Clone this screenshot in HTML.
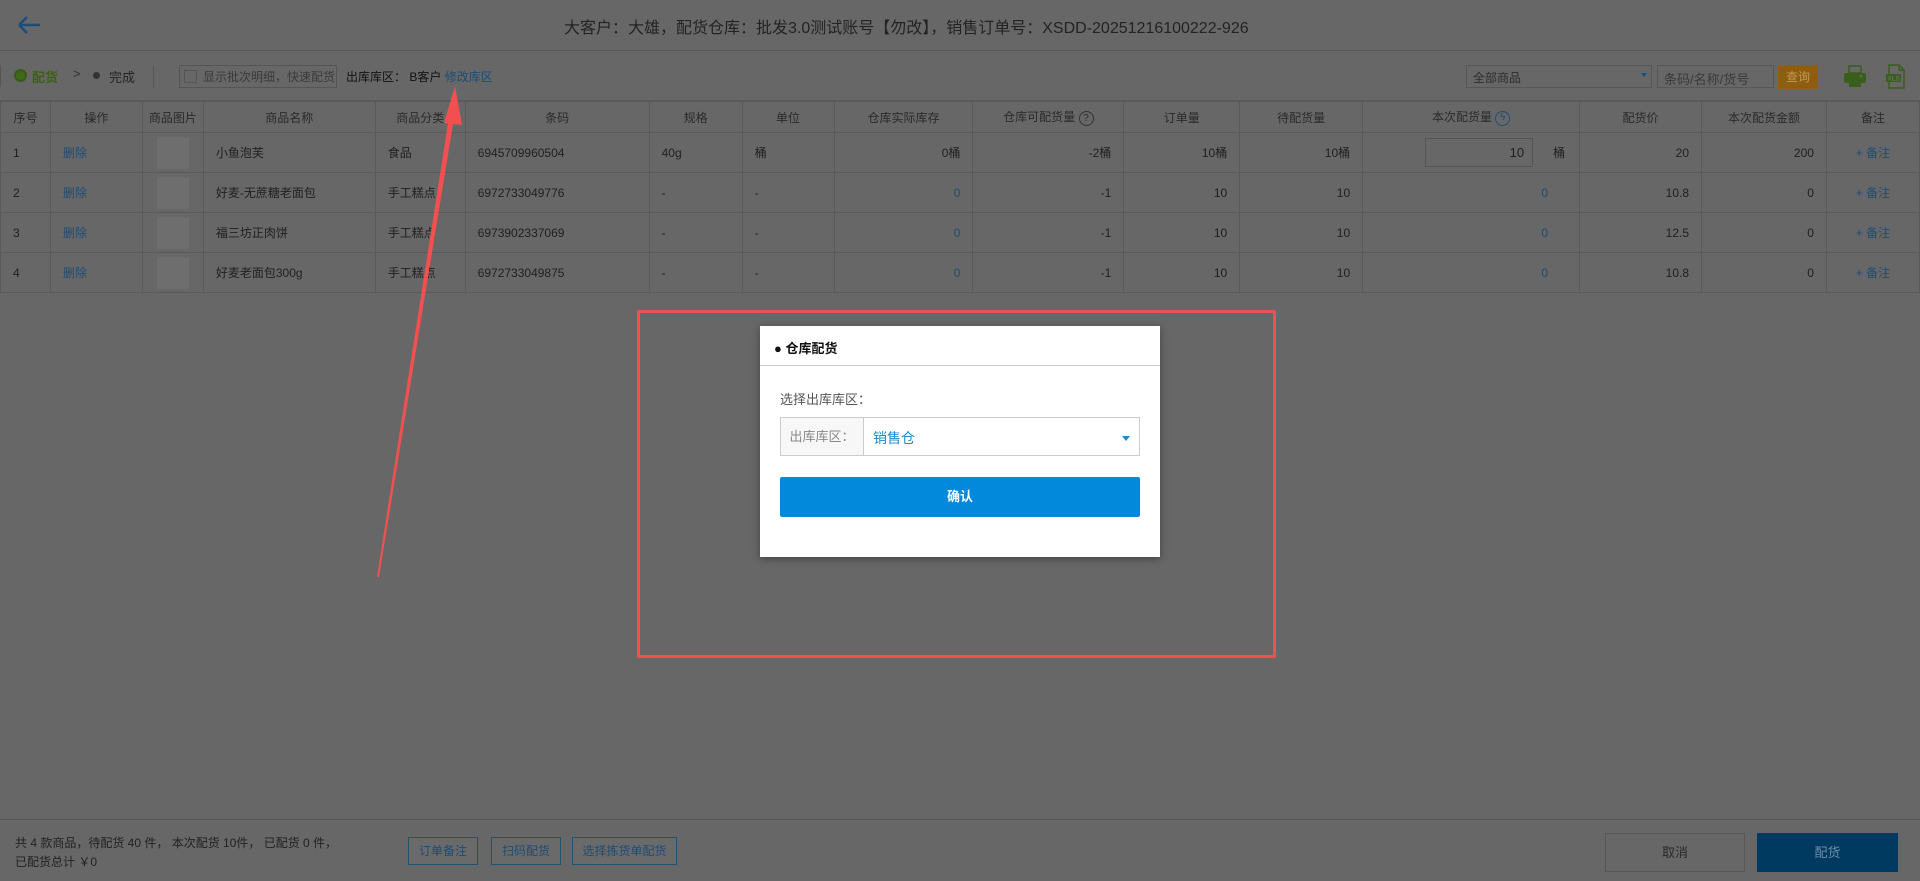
<!DOCTYPE html>
<html><head><meta charset="utf-8"><style>
*{margin:0;padding:0;box-sizing:border-box}
body{width:1920px;height:881px;background:#676767;font-family:"Liberation Sans","Noto Sans CJK SC",sans-serif;color:#1f1f1f;position:relative;overflow:hidden;font-size:12px}
.a{position:absolute;white-space:nowrap}
.blue{color:#1c4c78}
table{position:absolute;left:0;top:101px;width:1920px;border-collapse:collapse;font-size:12px}
td,th{border:1px solid #5a5a5a;height:40px;padding:0 12px;font-weight:normal}
th{height:31px;text-align:center;color:#2a2a2a}
td.r{text-align:right}
.img{display:inline-block;width:32px;height:32px;background:#6e6e6e;vertical-align:middle}
.btn{position:absolute;border:1px solid #1d5570;color:#1c4c78;background:#6a6a6a;text-align:center;font-size:12px}
</style></head><body>
<svg class="a" style="left:16px;top:14px" width="26" height="22" viewBox="0 0 26 22"><path d="M3 11H24M3 11L11 3M3 11L11 19" stroke="#1c4c78" stroke-width="2.4" fill="none"/></svg>
<div class="a" style="left:564px;top:14px;font-size:16px;color:#232323">大客户：大雄，配货仓库：批发3.0测试账号【勿改】，销售订单号：XSDD-20251216100222-926</div>
<div class="a" style="left:0;top:50px;width:1920px;height:1px;background:#585858"></div>
<div class="a" style="left:0;top:65px;width:1px;height:22px;background:#555"></div>
<div class="a" style="left:14px;top:69px;width:13px;height:13px;border-radius:50%;border:2px solid #3a5a1a;background:#3d6b1a"></div>
<div class="a" style="left:32px;top:67px;font-size:13px;color:#3d6015;font-weight:bold">配货</div>
<div class="a" style="left:73px;top:66px;font-size:13px;color:#333">&gt;</div>
<div class="a" style="left:93px;top:72px;width:7px;height:7px;border-radius:50%;background:#333"></div>
<div class="a" style="left:109px;top:67px;font-size:13px;color:#252525">完成</div>
<div class="a" style="left:153px;top:66px;width:1px;height:22px;background:#575757"></div>
<div class="a" style="left:179px;top:65px;width:158px;height:23px;border:1px solid #555"></div>
<div class="a" style="left:184px;top:70px;width:13px;height:13px;border:1px solid #555"></div>
<div class="a" style="left:203px;top:68px;font-size:12px;color:#3a3a3a">显示批次明细，快速配货</div>
<div class="a" style="left:346px;top:68px;font-size:12px;color:#111">出库库区： B客户 <span class="blue">修改库区</span></div>
<div class="a" style="left:1466px;top:65px;width:186px;height:23px;border:1px solid #575757"></div>
<div class="a" style="left:1473px;top:69px;color:#2d2d2d">全部商品</div>
<div class="a" style="left:1641px;top:73px;width:0;height:0;border-left:3px solid transparent;border-right:3px solid transparent;border-top:4px solid #1c4c78"></div>
<div class="a" style="left:1657px;top:65px;width:117px;height:23px;border:1px solid #575757"></div>
<div class="a" style="left:1664px;top:69px;color:#3a3a3a;font-size:13px">条码/名称/货号</div>
<div class="a" style="left:1778px;top:65px;width:40px;height:24px;background:#8e5d10;border:1px solid #9a5a10;color:#c09a58;font-size:12px;text-align:center;line-height:22px">查询</div>
<svg class="a" style="left:1843px;top:64px" width="24" height="24" viewBox="0 0 24 24"><rect x="6" y="2" width="12" height="7" fill="none" stroke="#3a5f1c" stroke-width="1.5"/><rect x="1" y="9" width="22" height="10" rx="2" fill="#3a5f1c"/><rect x="6" y="17" width="12" height="6" fill="#3a5f1c"/><circle cx="18" cy="12" r="1.3" fill="#666"/></svg>
<svg class="a" style="left:1886px;top:64px" width="20" height="25" viewBox="0 0 20 25"><path d="M3 1H13L18 6V24H3Z" fill="none" stroke="#3a5f1c" stroke-width="1.5"/><path d="M13 1V6H18" fill="none" stroke="#3a5f1c" stroke-width="1.5"/><rect x="0" y="10" width="15" height="8" fill="#3a5f1c"/><text x="1.5" y="16.5" font-size="6.5" fill="#777" font-family="Liberation Sans">XLS</text></svg>
<div class="a" style="left:0;top:100px;width:1920px;height:1px;background:#585858"></div>
<table>
<colgroup><col style="width:50px"><col style="width:92px"><col style="width:61px"><col style="width:172px"><col style="width:90px"><col style="width:184px"><col style="width:93px"><col style="width:92px"><col style="width:139px"><col style="width:151px"><col style="width:116px"><col style="width:123px"><col style="width:217px"><col style="width:122px"><col style="width:125px"><col style="width:93px"></colgroup>
<tr><th style="padding:0 4px">序号</th><th>操作</th><th style="padding:0 4px">商品图片</th><th>商品名称</th><th>商品分类</th><th>条码</th><th>规格</th><th>单位</th><th>仓库实际库存</th><th>仓库可配货量 <span style="display:inline-block;width:15px;height:15px;border:1px solid #333;border-radius:50%;font-size:10px;line-height:13px">?</span></th><th>订单量</th><th>待配货量</th><th>本次配货量 <span style="display:inline-block;width:15px;height:15px;border:1.5px solid #1c4c78;border-radius:50%;color:#1c4c78;font-size:10px;line-height:12px;vertical-align:middle">ϟ</span></th><th>配货价</th><th>本次配货金额</th><th>备注</th></tr>
<tr><td>1</td><td class="blue">删除</td><td style="text-align:center;padding:0"><span class="img"></span></td><td>小鱼泡芙</td><td>食品</td><td>6945709960504</td><td>40g</td><td>桶</td><td class="r">0桶</td><td class="r">-2桶</td><td class="r">10桶</td><td class="r">10桶</td><td style="text-align:right;padding-right:28px"><span style="display:inline-block;width:108px;height:29px;border:1px solid #555;text-align:right;padding-right:8px;line-height:27px;font-size:13px;margin-right:6px">10</span><span style="position:relative;right:-14px">桶</span></td><td class="r">20</td><td class="r">200</td><td style="text-align:center" class="blue">+ 备注</td></tr>
<tr><td>2</td><td class="blue">删除</td><td style="text-align:center;padding:0"><span class="img"></span></td><td>好麦-无蔗糖老面包</td><td>手工糕点</td><td>6972733049776</td><td>-</td><td>-</td><td class="r blue">0</td><td class="r">-1</td><td class="r">10</td><td class="r">10</td><td class="r blue" style="padding-right:31px">0</td><td class="r">10.8</td><td class="r">0</td><td style="text-align:center" class="blue">+ 备注</td></tr>
<tr><td>3</td><td class="blue">删除</td><td style="text-align:center;padding:0"><span class="img"></span></td><td>福三坊正肉饼</td><td>手工糕点</td><td>6973902337069</td><td>-</td><td>-</td><td class="r blue">0</td><td class="r">-1</td><td class="r">10</td><td class="r">10</td><td class="r blue" style="padding-right:31px">0</td><td class="r">12.5</td><td class="r">0</td><td style="text-align:center" class="blue">+ 备注</td></tr>
<tr><td>4</td><td class="blue">删除</td><td style="text-align:center;padding:0"><span class="img"></span></td><td>好麦老面包300g</td><td>手工糕点</td><td>6972733049875</td><td>-</td><td>-</td><td class="r blue">0</td><td class="r">-1</td><td class="r">10</td><td class="r">10</td><td class="r blue" style="padding-right:31px">0</td><td class="r">10.8</td><td class="r">0</td><td style="text-align:center" class="blue">+ 备注</td></tr>
</table>
<div class="a" style="left:637px;top:310px;width:639px;height:348px;border:3px solid #f25050;border-radius:2px"></div>
<div class="a" style="left:760px;top:326px;width:400px;height:231px;background:#fff;box-shadow:0 2px 8px rgba(0,0,0,.35)">
<div class="a" style="left:14px;top:12px;font-size:13px;font-weight:bold;color:#111">● 仓库配货</div>
<div class="a" style="left:0;top:39px;width:400px;height:1px;background:#ccc"></div>
<div class="a" style="left:20px;top:63px;font-size:13px;color:#555">选择出库库区：</div>
<div class="a" style="left:20px;top:91px;width:360px;height:39px;border:1px solid #ccc"></div>
<div class="a" style="left:21px;top:92px;width:83px;height:37px;background:#f7f7f7;border-right:1px solid #ccc;color:#888;font-size:13px;line-height:37px;text-align:center">出库库区：</div>
<div class="a" style="left:113px;top:102px;font-size:14px;color:#1d8ccc">销售仓</div>
<div class="a" style="left:362px;top:110px;width:0;height:0;border-left:4px solid transparent;border-right:4px solid transparent;border-top:5px solid #1d8ccc"></div>
<div class="a" style="left:20px;top:151px;width:360px;height:40px;background:#0289dc;border-radius:2px;color:#fff;font-size:13px;font-weight:bold;text-align:center;line-height:40px">确认</div>
</div>
<svg class="a" style="left:0;top:0" width="1920" height="881"><polygon points="377,577 379,577 454,118 449,117" fill="#f25050"/><polygon points="455,86 444,123 462,125" fill="#f25050"/></svg>
<div class="a" style="left:0;top:819px;width:1920px;height:1px;background:#555"></div>
<div class="a" style="left:15px;top:834px;font-size:12px;color:#222;line-height:19px">共 4 款商品，待配货 40 件， 本次配货 10件， 已配货 0 件，<br>已配货总计 ￥0</div>
<div class="btn" style="left:408px;top:837px;width:70px;height:28px;line-height:26px">订单备注</div>
<div class="btn" style="left:491px;top:837px;width:70px;height:28px;line-height:26px">扫码配货</div>
<div class="btn" style="left:572px;top:837px;width:105px;height:28px;line-height:26px">选择拣货单配货</div>
<div class="a" style="left:1605px;top:833px;width:140px;height:39px;border:1px solid #575757;text-align:center;line-height:37px;color:#2a2a2a;font-size:13px">取消</div>
<div class="a" style="left:1757px;top:833px;width:141px;height:39px;background:#003a60;text-align:center;line-height:39px;color:#6d8ea5;font-size:13px">配货</div>
</body></html>
